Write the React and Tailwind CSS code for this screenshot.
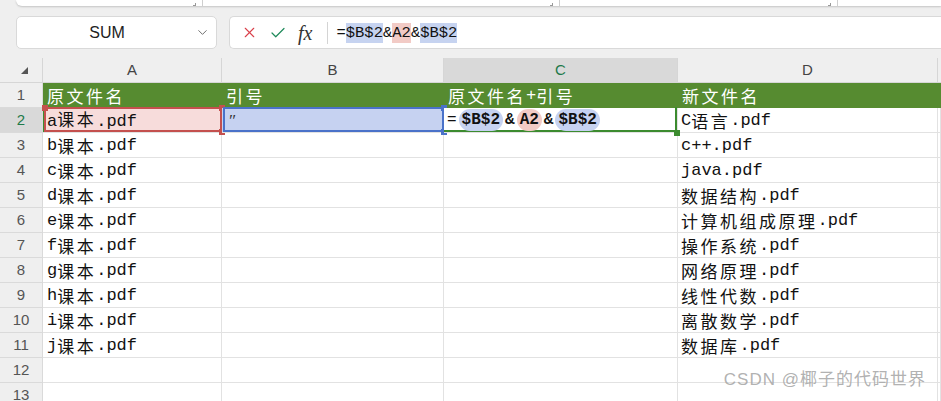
import React from 'react';
import { X, Check, ChevronDown } from 'lucide-react';

const isCJK = (ch) => /[\u3000-\u9fff\uff00-\uffef]/.test(ch);

// split a string into runs so that CJK gets its own size and spacing
const Txt = ({ s }) => {
  const runs = [];
  for (const ch of s) {
    const c = isCJK(ch);
    if (runs.length && runs[runs.length - 1].c === c) runs[runs.length - 1].t += ch;
    else runs.push({ c, t: ch });
  }
  return runs.map((r, i) =>
    r.c ? (
      <span key={i} className="text-[17px] tracking-[2.5px] font-['Noto_Sans_CJK_SC',sans-serif]">
        {r.t}
      </span>
    ) : (
      <span key={i}>{r.t}</span>
    )
  );
};

const colA = ['a课本.pdf', 'b课本.pdf', 'c课本.pdf', 'd课本.pdf', 'e课本.pdf', 'f课本.pdf', 'g课本.pdf', 'h课本.pdf', 'i课本.pdf', 'j课本.pdf'];
const colD = ['C语言.pdf', 'c++.pdf', 'java.pdf', '数据结构.pdf', '计算机组成原理.pdf', '操作系统.pdf', '网络原理.pdf', '线性代数.pdf', '离散数学.pdf', '数据库.pdf'];

const cell = 'border-r border-b border-[#e2e2e2] bg-white flex items-center overflow-hidden whitespace-nowrap';
const mono = "font-['Liberation_Mono','Noto_Sans_CJK_SC',monospace] text-[17px] leading-none text-[#111]";

const ColHead = ({ label, active }) => (
  <div
    className={`flex items-center justify-center border-r border-b border-[#d6d6d6] text-[15px] font-['Liberation_Sans',sans-serif] ${
      active ? 'bg-[#d9d9d9] text-[#1f7a4a]' : 'bg-[#efefef] text-[#444]'
    }`}
  >
    {label}
  </div>
);

const RowHead = ({ n, active }) => (
  <div
    className={`flex items-center justify-center border-r border-b border-[#dadada] text-[15px] font-['Liberation_Sans',sans-serif] ${
      active ? 'bg-[#d9d9d9] text-[#1f7a4a]' : 'bg-[#efefef] text-[#555]'
    }`}
  >
    {n}
  </div>
);

const Corner = ({ className }) => <div className={`absolute w-[6px] h-[6px] ${className}`} />;

export default function App() {
  const rows = [];
  for (let r = 3; r <= 13; r++) {
    const a = colA[r - 2];
    const d = colD[r - 2];
    rows.push(
      <React.Fragment key={r}>
        <RowHead n={r} />
        <div className={`${cell} ${mono} pl-[4px]`}>{a && <Txt s={a} />}</div>
        <div className={cell} />
        <div className={cell} />
        <div className={`${cell} ${mono} pl-[3px]`}>{d && <Txt s={d} />}</div>
        <div className={cell} />
      </React.Fragment>
    );
  }

  return (
    <div className="w-[941px] h-[401px] overflow-hidden bg-[#efefef] relative font-['Liberation_Sans',sans-serif]">
      {/* top ribbon edge */}
      <div className="h-[16px] pl-4">
        <div className="h-[6px] bg-white rounded-bl-md shadow-[0_1px_2px_rgba(0,0,0,0.18)] flex">
          <div className="w-[187px] border-r border-[#cfcfcf] flex justify-end items-end pr-[6px]">
            <div className="w-[3px] h-[3px] border-r border-b border-[#999]" />
          </div>
          <div className="w-[357px] border-r border-[#cfcfcf] flex justify-end items-end pr-[6px]">
            <div className="w-[3px] h-[3px] border-r border-b border-[#999]" />
          </div>
          <div className="w-[278px] border-r border-[#cfcfcf] flex justify-end items-end pr-[6px]">
            <div className="w-[3px] h-[3px] border-r border-b border-[#999]" />
          </div>
          <div className="flex-1" />
        </div>
      </div>

      {/* name box + formula bar */}
      <div className="flex gap-3 pl-4 h-[33px]">
        <div className="w-[201px] bg-white border border-[#d9d9d9] rounded-[5px] flex items-center">
          <div className="flex-1 text-center text-[16px] text-[#222] pl-[2px]">SUM</div>
          <ChevronDown className="w-[15px] h-[15px] text-[#666] mr-[6px]" strokeWidth={1.5} />
        </div>
        <div className="flex-1 bg-white border border-r-0 border-[#d9d9d9] rounded-l-[5px] flex items-center">
          <X className="w-[17px] h-[17px] text-[#d9404a] ml-[11px]" strokeWidth={1.6} />
          <Check className="w-[18px] h-[18px] text-[#1e8a5a] ml-[11px]" strokeWidth={1.6} />
          <span className="ml-[11px] font-['Liberation_Serif',serif] italic text-[20px] text-[#333] leading-none">fx</span>
          <div className="w-px h-[22px] bg-[#d4d4d4] ml-[15px]" />
          <div className="ml-[8px] font-['Liberation_Mono',monospace] text-[15.5px] leading-[20px] text-[#111] flex">
            <span>=</span>
            <span className="bg-[#c6d3f0]">$B$2</span>
            <span>&amp;</span>
            <span className="bg-[#f2cbc6]">A2</span>
            <span>&amp;</span>
            <span className="bg-[#c6d3f0]">$B$2</span>
          </div>
        </div>
      </div>

      {/* sheet */}
      <div className="mt-[9px] grid grid-cols-[43px_179px_222px_234px_260px_1fr] grid-rows-[repeat(14,25px)]">
        {/* column headers */}
        <div className="bg-[#efefef] border-r border-b border-[#d6d6d6] flex items-end justify-center pb-[8px] pl-[6px]">
          <div className="w-0 h-0 border-l-[7px] border-l-transparent border-b-[7px] border-b-[#555]" />
        </div>
        <ColHead label="A" />
        <ColHead label="B" />
        <ColHead label="C" active />
        <ColHead label="D" />
        <div className="bg-[#efefef] border-b border-[#d6d6d6]" />

        {/* row 1 */}
        <RowHead n={1} />
        {['原文件名', '引号', '原文件名+引号', '新文件名'].map((h, i) => (
          <div key={i} className="bg-[#568b30] flex items-center pl-[4px] text-white text-[17px] leading-none font-['Liberation_Mono','Noto_Sans_CJK_SC',monospace] whitespace-nowrap overflow-hidden">
            <Txt s={h} />
          </div>
        ))}
        <div className="bg-[#568b30]" />

        {/* row 2 */}
        <RowHead n={2} active />
        <div className={`${cell} ${mono} pl-[4px] relative !bg-[#f7dcdb] overflow-visible`}>
          <div className="absolute left-0 top-0 bottom-0 w-[2px] bg-[#3c8b2f]" />
          <div className="absolute left-[1px] -top-[1px] right-[-1px] bottom-0 border-2 border-[#c4504e]" />
          <Corner className="bg-[#c4504e] -top-[3px] left-[-1px]" />
          <Corner className="bg-[#c4504e] -top-[3px] -right-[4px]" />
          <Corner className="bg-[#c4504e] -bottom-[3px] -right-[4px]" />
          <span className="relative"><Txt s="a课本.pdf" /></span>
        </div>
        <div className={`${cell} relative !bg-[#c6d2f1] overflow-visible pl-[6px] items-start pt-[4px]`}>
          <div className="absolute left-[1px] -top-[1px] right-[-1px] bottom-0 border-2 border-[#4a72c9]" />
          <Corner className="bg-[#4a72c9] -top-[3px] -right-[4px]" />
          <Corner className="bg-[#4a72c9] -bottom-[3px] -right-[4px]" />
          <span className="relative italic text-[17px] leading-none text-[#333] font-['Liberation_Serif',serif]">″</span>
        </div>
        <div className={`${cell} relative overflow-visible pl-[3px] font-['Liberation_Mono',monospace] text-[16px] leading-none text-[#111]`}>
          <div className="absolute left-0 -top-[1px] right-0 bottom-0 border-b-2 border-r-2 border-[#3c8b2f]" />
          <Corner className="bg-[#3c8b2f] -bottom-[4px] -right-[3px]" />
          <span className="relative flex items-center">
            <span className="mr-[2px]">=</span>
            <span className="bg-[#c6d2f1] rounded-full px-[3px] py-[3px] font-bold">$B$2</span>
            <span className="mx-[2px] font-bold">&amp;</span>
            <span className="bg-[#f2cbc6] rounded-full px-[3px] py-[3px] font-bold">A2</span>
            <span className="mx-[2px] font-bold">&amp;</span>
            <span className="bg-[#c6d2f1] rounded-full px-[3px] py-[3px] font-bold">$B$2</span>
          </span>
        </div>
        <div className={`${cell} ${mono} pl-[3px]`}>
          <Txt s="C语言.pdf" />
        </div>
        <div className={cell} />

        {rows.slice(0, 12)}
      </div>

      {/* watermark */}
      <div className="absolute right-[15px] bottom-[9px] text-[17px] text-[#a8a8a8]/90 font-['Liberation_Sans','Noto_Sans_CJK_SC',sans-serif] tracking-[1px]">
        CSDN @椰子的代码世界
      </div>
    </div>
  );
}
